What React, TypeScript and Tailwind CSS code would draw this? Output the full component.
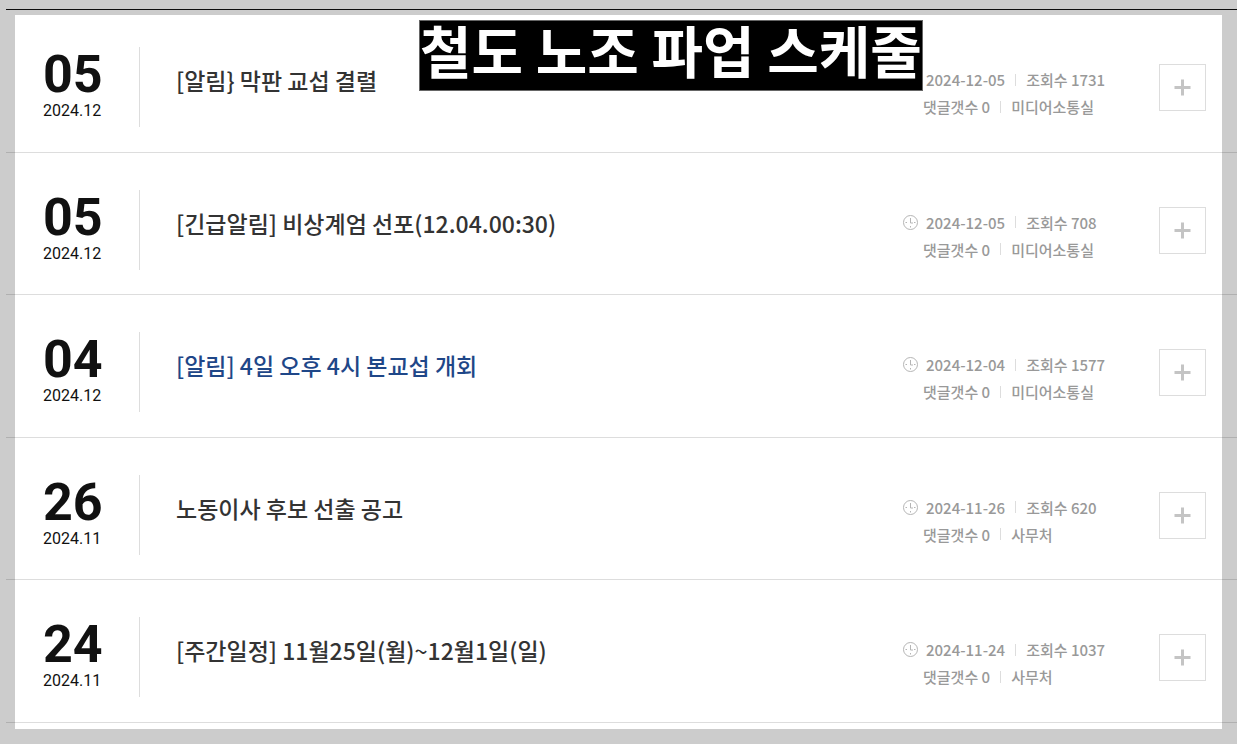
const posts = [
  { day: "05", month: "2024.12", title: "[알림} 막판 교섭 결렬", date: "2024-12-05", views: 1731, comments: 0, author: "미디어소통실" },
  { day: "05", month: "2024.12", title: "[긴급알림] 비상계엄 선포(12.04.00:30)", date: "2024-12-05", views: 708, comments: 0, author: "미디어소통실" },
  { day: "04", month: "2024.12", title: "[알림] 4일 오후 4시 본교섭 개회", date: "2024-12-04", views: 1577, comments: 0, author: "미디어소통실", active: true },
  { day: "26", month: "2024.11", title: "노동이사 후보 선출 공고", date: "2024-11-26", views: 620, comments: 0, author: "사무처" },
  { day: "24", month: "2024.11", title: "[주간일정] 11월25일(월)~12월1일(일)", date: "2024-11-24", views: 1037, comments: 0, author: "사무처" },
];

export const App = () => {
  return (
    <div className="relative min-h-screen flex flex-col bg-white pt-[9px] pb-[21px] pl-[6px] font-['Noto_Sans_CJK_KR',sans-serif]">
      <ul className="flex-1 grid auto-rows-fr border-t border-[#111]">
        {posts.map((post, index) => (
          <PostRow key={index} post={post} />
        ))}
      </ul>

      {/* Frame */}
      <div className="absolute inset-0 border-[15px] border-black/20 pointer-events-none"></div>

      {/* Banner */}
      <h1 className="absolute top-5 left-[419px] h-[71px] border border-[#666] bg-black text-white text-[56px] leading-[56px] font-bold whitespace-nowrap">
        철도 노조 파업 스케줄
      </h1>
    </div>
  );
};

const PostRow = ({ post } : any) => (
  <li className="flex items-start border-b border-[#ddd] pt-[37px] pb-5 pl-[37px] pr-[31px]">
    <div className="w-[97px] h-20 shrink-0 border-r border-[#ddd] text-[#111] font-[Roboto,sans-serif]">
      <p className="text-[52px] leading-[56px] font-bold">{post.day}</p>
      <p className="text-base leading-4">{post.month}</p>
    </div>
    <h2 className={`flex-1 min-w-0 mt-4 pl-9 text-[23px] leading-[34px] font-medium ${post.active ? "text-[#1f4788]" : "text-[#333]"}`}>
      <a href="#">{post.title}</a>
    </h2>
    <div className="w-[256px] shrink-0 mt-[19px] text-[15px] leading-[27px] text-[#999] font-medium">
      <div className="flex items-center">
        <ClockIcon />
        <span className="ml-2">{post.date}</span>
        <Divider />
        <span>조회수 {post.views}</span>
      </div>
      <div className="flex items-center pl-5">
        <span>댓글갯수 {post.comments}</span>
        <Divider />
        <span>{post.author}</span>
      </div>
    </div>
    <button
      type="button"
      aria-label="더보기"
      className="mt-[17px] size-[47px] shrink-0 flex items-center justify-center border border-[#ddd]"
    >
      <PlusIcon />
    </button>
  </li>
);

const Divider = () => <span className="mx-[10px] h-3 w-px bg-[#ddd]"></span>;

const PlusIcon = () => (
  <svg width="17" height="17" viewBox="0 0 17 17" fill="none" stroke="#c4c4c4" strokeWidth="3">
    <path d="M8.5 0.5V16.5M0.5 8.5H16.5" />
  </svg>
);

const ClockIcon = () => (
  <svg width="15" height="15" viewBox="0 0 15 15" fill="none" stroke="#b5b5b5">
    <circle cx="7.5" cy="7.5" r="7" />
    <path d="M7.5 3v5H10M7.5 11v1.5M2.5 7.5H4M11 7.5h1.5" />
  </svg>
);

export default App;
